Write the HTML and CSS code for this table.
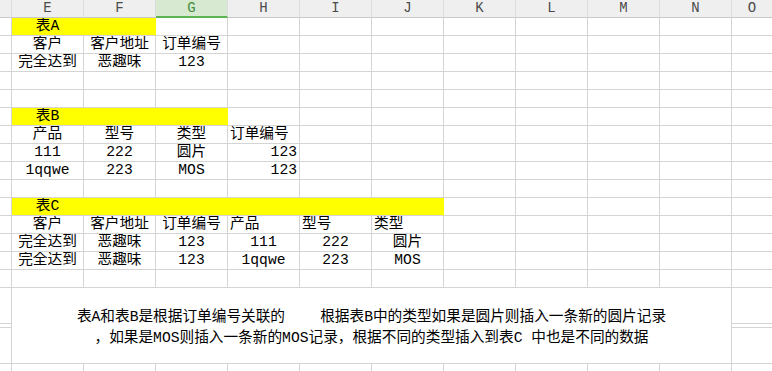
FILE: index.html
```html
<!DOCTYPE html>
<html lang="zh-CN">
<head>
<meta charset="utf-8">
<title>Sheet</title>
<link rel="stylesheet" href="styles.css">
</head>
<body>
<div class="sheet">
  <div class="row hd">
    <div class="c d"></div><div class="c">E</div><div class="c">F</div><div class="c sel">G</div><div class="c">H</div><div class="c">I</div><div class="c">J</div><div class="c">K</div><div class="c">L</div><div class="c">M</div><div class="c">N</div><div class="c o">O</div>
  </div>

  <div class="row">
    <div class="c d"></div><div class="c y w2"><span>表A</span></div><div class="c"></div><div class="c"></div><div class="c"></div><div class="c"></div><div class="c"></div><div class="c"></div><div class="c"></div><div class="c"></div><div class="c o"></div>
  </div>
  <div class="row">
    <div class="c d"></div><div class="c">客户</div><div class="c">客户地址</div><div class="c">订单编号</div><div class="c"></div><div class="c"></div><div class="c"></div><div class="c"></div><div class="c"></div><div class="c"></div><div class="c"></div><div class="c o"></div>
  </div>
  <div class="row">
    <div class="c d"></div><div class="c">完全达到</div><div class="c">恶趣味</div><div class="c">123</div><div class="c"></div><div class="c"></div><div class="c"></div><div class="c"></div><div class="c"></div><div class="c"></div><div class="c"></div><div class="c o"></div>
  </div>
  <div class="row">
    <div class="c d"></div><div class="c"></div><div class="c"></div><div class="c"></div><div class="c"></div><div class="c"></div><div class="c"></div><div class="c"></div><div class="c"></div><div class="c"></div><div class="c"></div><div class="c o"></div>
  </div>
  <div class="row">
    <div class="c d"></div><div class="c"></div><div class="c"></div><div class="c"></div><div class="c"></div><div class="c"></div><div class="c"></div><div class="c"></div><div class="c"></div><div class="c"></div><div class="c"></div><div class="c o"></div>
  </div>

  <div class="row">
    <div class="c d"></div><div class="c y w3"><span>表B</span></div><div class="c"></div><div class="c"></div><div class="c"></div><div class="c"></div><div class="c"></div><div class="c"></div><div class="c"></div><div class="c o"></div>
  </div>
  <div class="row">
    <div class="c d"></div><div class="c">产品</div><div class="c">型号</div><div class="c">类型</div><div class="c l">订单编号</div><div class="c"></div><div class="c"></div><div class="c"></div><div class="c"></div><div class="c"></div><div class="c"></div><div class="c o"></div>
  </div>
  <div class="row">
    <div class="c d"></div><div class="c">111</div><div class="c">222</div><div class="c">圆片</div><div class="c r">123</div><div class="c"></div><div class="c"></div><div class="c"></div><div class="c"></div><div class="c"></div><div class="c"></div><div class="c o"></div>
  </div>
  <div class="row">
    <div class="c d"></div><div class="c">1qqwe</div><div class="c">223</div><div class="c">MOS</div><div class="c r">123</div><div class="c"></div><div class="c"></div><div class="c"></div><div class="c"></div><div class="c"></div><div class="c"></div><div class="c o"></div>
  </div>
  <div class="row">
    <div class="c d"></div><div class="c"></div><div class="c"></div><div class="c"></div><div class="c"></div><div class="c"></div><div class="c"></div><div class="c"></div><div class="c"></div><div class="c"></div><div class="c"></div><div class="c o"></div>
  </div>

  <div class="row">
    <div class="c d"></div><div class="c y w6"><span>表C</span></div><div class="c"></div><div class="c"></div><div class="c"></div><div class="c"></div><div class="c o"></div>
  </div>
  <div class="row">
    <div class="c d"></div><div class="c">客户</div><div class="c">客户地址</div><div class="c">订单编号</div><div class="c l">产品</div><div class="c l">型号</div><div class="c l">类型</div><div class="c"></div><div class="c"></div><div class="c"></div><div class="c"></div><div class="c o"></div>
  </div>
  <div class="row">
    <div class="c d"></div><div class="c">完全达到</div><div class="c">恶趣味</div><div class="c">123</div><div class="c">111</div><div class="c">222</div><div class="c">圆片</div><div class="c"></div><div class="c"></div><div class="c"></div><div class="c"></div><div class="c o"></div>
  </div>
  <div class="row">
    <div class="c d"></div><div class="c">完全达到</div><div class="c">恶趣味</div><div class="c">123</div><div class="c">1qqwe</div><div class="c">223</div><div class="c">MOS</div><div class="c"></div><div class="c"></div><div class="c"></div><div class="c"></div><div class="c o"></div>
  </div>
  <div class="row">
    <div class="c d"></div><div class="c"></div><div class="c"></div><div class="c"></div><div class="c"></div><div class="c"></div><div class="c"></div><div class="c"></div><div class="c"></div><div class="c"></div><div class="c"></div><div class="c o"></div>
  </div>

  <div class="block">
    <div class="stack d">
      <div class="c tall"></div><div class="c thin"></div><div class="c tall"></div>
    </div>
    <div class="c note">
      <div>表A和表B是根据订单编号关联的    根据表B中的类型如果是圆片则插入一条新的圆片记录</div>
      <div>，如果是MOS则插入一条新的MOS记录，根据不同的类型插入到表C 中也是不同的数据</div>
    </div>
    <div class="stack o">
      <div class="c tall"></div><div class="c thin"></div><div class="c tall"></div>
    </div>
  </div>

  <div class="row">
    <div class="c d"></div><div class="c"></div><div class="c"></div><div class="c"></div><div class="c"></div><div class="c"></div><div class="c"></div><div class="c"></div><div class="c"></div><div class="c"></div><div class="c"></div><div class="c o"></div>
  </div>
</div>
</body>
</html>
```

FILE: styles.css
```css
html, body {
  margin: 0;
  padding: 0;
  background: #ffffff;
}

body {
  font-family: "Liberation Mono", "Noto Sans CJK SC", monospace;
  font-size: 14.67px;
  color: #000000;
  overflow: hidden;
}

.sheet {
  width: 772px;
}

.row {
  display: flex;
  height: 18px;
}

.c {
  flex: none;
  width: 72px;
  height: 100%;
  box-sizing: border-box;
  border-right: 1px solid #d4d4d4;
  border-bottom: 1px solid #d4d4d4;
  line-height: 17px;
  text-align: center;
  white-space: nowrap;
  overflow: hidden;
}

.d {
  width: 12px;
}

.o {
  flex: 1;
  border-right: 0;
}

.hd .c {
  background: #efefef;
  color: #4a4a4a;
  font-size: 14px;
  border-right-color: #dcdcdc;
  border-bottom-color: #c8c8c8;
}

.hd .sel {
  background: #d8e9d2;
  color: #3f8f3a;
  border-bottom: 2px solid #5cb552;
  line-height: 16px;
}

.l {
  text-align: left;
  padding-left: 2px;
}

.r {
  text-align: right;
  padding-right: 2px;
}

.y {
  background: #ffff00;
  border-right-color: #ffff00;
  text-align: left;
}

.y span {
  display: inline-block;
  width: 71px;
  text-align: center;
}

.w2 { width: 144px; }
.w3 { width: 216px; }
.w6 { width: 432px; }

.block {
  display: flex;
  height: 76px;
}

.stack {
  display: flex;
  flex-direction: column;
}

.stack.d {
  flex: none;
}

.stack .c {
  width: 100%;
}

.stack.o .c {
  border-right: 0;
}

.tall {
  height: 36px;
}

.thin {
  height: 4px;
}

.note {
  width: 720px;
  height: 76px;
  display: flex;
  flex-direction: column;
  justify-content: center;
  align-items: center;
  padding-top: 4px;
  line-height: 21px;
  white-space: pre;
}
```
